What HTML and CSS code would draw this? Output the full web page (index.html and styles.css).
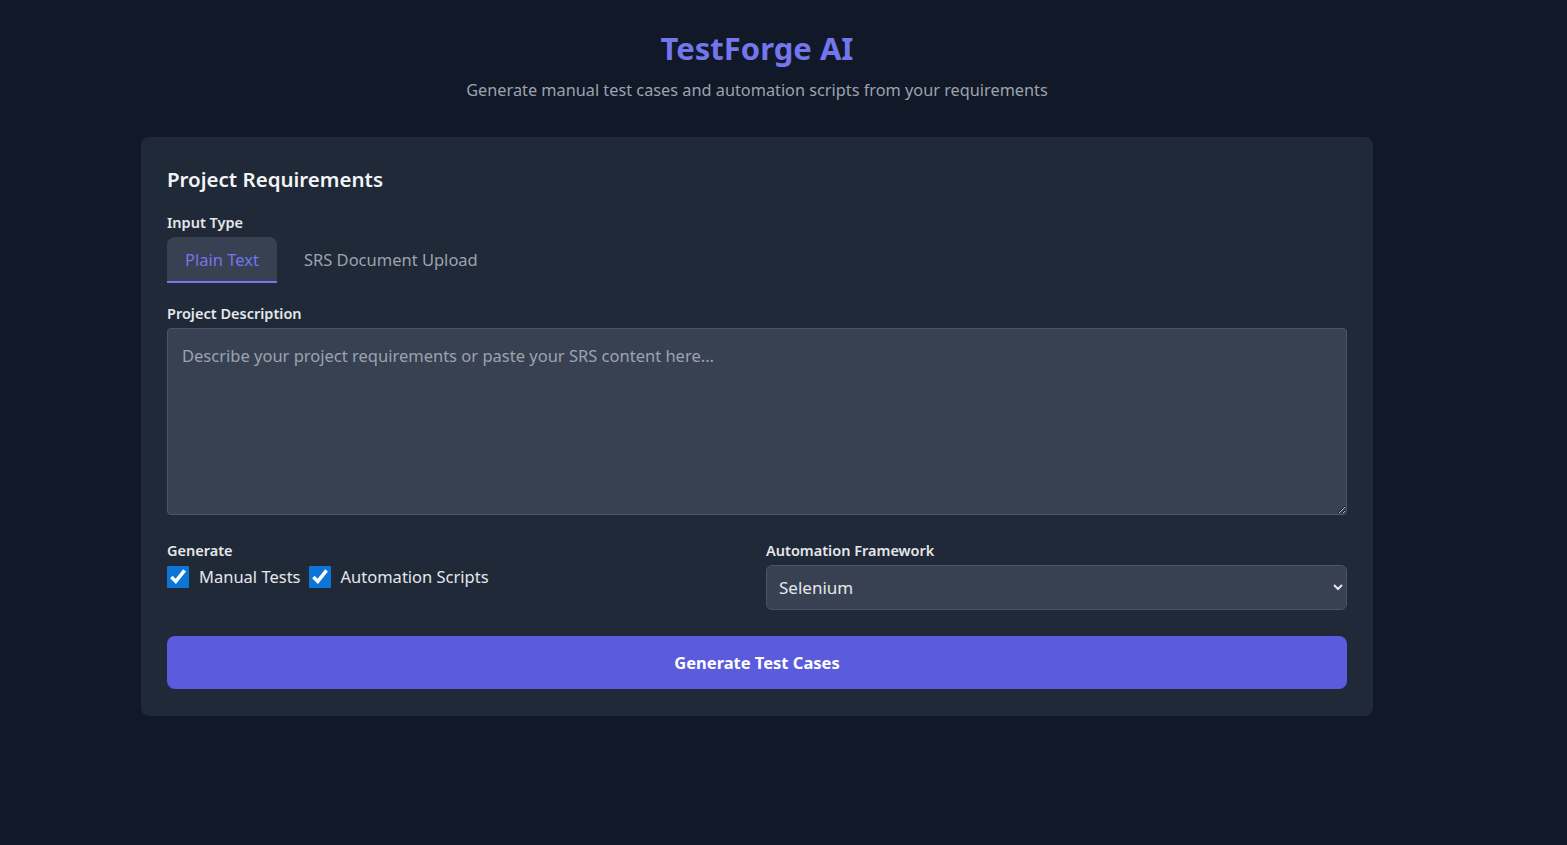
FILE: index.html
```html
<!DOCTYPE html>
<html lang="en">
<head>
<meta charset="utf-8">
<title>TestForge AI</title>
<link rel="stylesheet" href="styles.css">
</head>
<body>
<div class="page">
  <header class="hero">
    <h1 class="title">TestForge AI</h1>
    <p class="subtitle">Generate manual test cases and automation scripts from your requirements</p>
  </header>
  <section class="card">
    <h2 class="card-title">Project Requirements</h2>
    <div class="field">
      <label class="label">Input Type</label>
      <div class="tabs">
        <button class="tab active">Plain Text</button>
        <button class="tab">SRS Document Upload</button>
      </div>
    </div>
    <div class="field">
      <label class="label" for="desc">Project Description</label>
      <textarea id="desc" class="textarea" placeholder="Describe your project requirements or paste your SRS content here..."></textarea>
    </div>
    <div class="options">
      <div class="col">
        <label class="label">Generate</label>
        <div class="checks">
          <label class="check"><input type="checkbox" checked> <span>Manual Tests</span></label>
          <label class="check"><input type="checkbox" checked> <span>Automation Scripts</span></label>
        </div>
      </div>
      <div class="col">
        <label class="label" for="fw">Automation Framework</label>
        <select id="fw" class="select">
          <option>Selenium</option>
          <option>Playwright</option>
          <option>Cypress</option>
        </select>
      </div>
    </div>
    <button class="generate">Generate Test Cases</button>
  </section>
</div>
</body>
</html>
```
FILE: styles.css
```css
* { box-sizing: border-box; }
html, body {
  margin: 0;
  background: #111827;
  color: #e5e7eb;
  font-family: "Noto Sans", "Open Sans", sans-serif;
}
.page {
  width: 1514px;
  padding-top: 28px;
}
.hero {
  text-align: center;
}
.title {
  margin: 0;
  font-size: 31px;
  line-height: 40px;
  font-weight: 700;
  color: #7476ec;
}
.subtitle {
  margin: 10px 0 0;
  font-size: 16.3px;
  line-height: 24px;
  color: #9ca3af;
}
.card {
  width: 1232px;
  margin: 35px auto 0;
  background: #1f2937;
  border-radius: 8px;
  padding: 27px 26px 27px;
}
.card-title {
  margin: 0 0 18px;
  font-size: 20.5px;
  line-height: 30px;
  font-weight: 600;
  color: #f3f4f6;
}
.field {
  margin-bottom: 20px;
}
.label {
  display: block;
  font-size: 14.5px;
  line-height: 20px;
  font-weight: 600;
  color: #e5e7eb;
  margin-bottom: 5px;
}
.tabs {
  display: flex;
}
.tab {
  font-family: inherit;
  font-size: 16.5px;
  line-height: 24px;
  background: transparent;
  border: none;
  border-bottom: 2px solid transparent;
  color: #9ca3af;
  padding: 11px 18px 9px;
  margin-right: 9px;
  border-radius: 8px 8px 0 0;
  cursor: pointer;
}
.tab.active {
  background: #374151;
  color: #7476ec;
  border-bottom-color: #7476ec;
}
.textarea {
  display: block;
  width: 100%;
  height: 187px;
  background: #374151;
  border: 1px solid #4b5563;
  border-radius: 4px;
  padding: 14px 14px;
  font-family: inherit;
  font-size: 16.5px;
  line-height: 26px;
  color: #e5e7eb;
  color-scheme: dark;
  resize: vertical;
}
.textarea::placeholder {
  color: #9ca3af;
}
.options {
  display: grid;
  grid-template-columns: 1fr 1fr;
  gap: 18px;
  margin-top: 25px;
}
.checks {
  display: flex;
  align-items: center;
  gap: 8px;
}
.check {
  display: flex;
  align-items: center;
  font-size: 16.5px;
  line-height: 24px;
  color: #e5e7eb;
}
.check input {
  width: 22px;
  height: 22px;
  margin: 0 10px 0 0;
  accent-color: #0b76d8;
}
.select {
  display: block;
  width: 100%;
  height: 45px;
  background: #374151;
  border: 1px solid #4b5563;
  border-radius: 6px;
  padding: 0 8px;
  font-family: inherit;
  font-size: 17px;
  color: #e5e7eb;
  color-scheme: dark;
}
.generate {
  display: block;
  width: 100%;
  height: 53px;
  margin-top: 26px;
  background: #5b5bdd;
  border: none;
  border-radius: 8px;
  color: #ffffff;
  font-family: inherit;
  font-size: 16.5px;
  font-weight: 700;
  cursor: pointer;
}
```
